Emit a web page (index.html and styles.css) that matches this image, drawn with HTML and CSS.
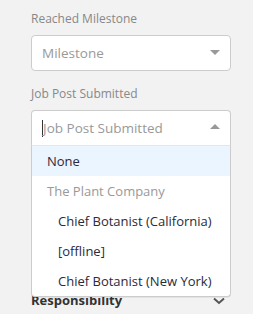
FILE: index.html
```html
<!DOCTYPE html>
<html lang="en">
<head>
    <meta charset="UTF-8">
    <meta name="viewport" content="width=device-width, initial-scale=1.0">
    <title>Filters</title>
    <link rel="stylesheet" href="styles.css">
</head>
<body>

    <div class="filters">
        <label class="field-label">Reached Milestone</label>
        <div class="select">
            <div class="select-control">
                <span class="select-placeholder">Milestone</span>
                <span class="select-arrow"></span>
            </div>
        </div>

        <label class="field-label">Job Post Submitted</label>
        <div class="select is-open">
            <div class="select-control">
                <span class="select-caret"></span>
                <span class="select-placeholder">Job Post Submitted</span>
                <span class="select-arrow"></span>
            </div>
            <div class="select-menu">
                <div class="select-option is-focused">None</div>
                <div class="select-group">The Plant Company</div>
                <div class="select-option is-child">Chief Botanist (California)</div>
                <div class="select-option is-child">[offline]</div>
                <div class="select-option is-child">Chief Botanist (New York)</div>
            </div>
        </div>

        <div class="section-header">
            <span>Responsibility</span>
            <svg class="chevron" width="12" height="8" viewBox="0 0 12 8">
                <path d="M1 1.5 L6 6 L11 1.5" fill="none" stroke="#555" stroke-width="2"/>
            </svg>
        </div>
    </div>

</body>
</html>
```

FILE: styles.css
```css
body {
    margin: 0;
    padding: 0;
    background-color: #f2f2f2;
    font-family: "Open Sans", "Liberation Sans", sans-serif;
    color: #333;
}
.filters {
    width: 200px;
    padding: 11px 0 0 31px;
}
.field-label {
    display: block;
    font-size: 12px;
    line-height: 16px;
    color: #888;
    margin-bottom: 8px;
}
.select {
    position: relative;
    margin-bottom: 15px;
}
.select-control {
    display: flex;
    align-items: center;
    height: 34px;
    padding: 0 10px;
    background-color: white;
    border: 1px solid #ccc;
    border-radius: 4px;
}
.select-placeholder {
    flex: 1;
    font-size: 13.5px;
    color: #999;
}
.select-caret {
    width: 1px;
    height: 17px;
    background-color: #333;
}
.select-arrow {
    width: 0;
    height: 0;
    border-style: solid;
    border-width: 5px 5px 3px;
    border-color: #999 transparent transparent;
    margin-top: 2px;
}
.is-open {
    margin-bottom: 0;
}
.is-open .select-control {
    border-radius: 4px 4px 0 0;
    border-bottom-color: #e6e6e6;
}
.is-open .select-arrow {
    border-width: 0 5px 5px;
    border-color: transparent transparent #999;
    margin-top: -3px;
}
.select-menu {
    position: absolute;
    top: 100%;
    left: 0;
    right: 0;
    z-index: 1;
    background-color: white;
    border: 1px solid #ccc;
    border-top: none;
    border-radius: 0 0 4px 4px;
    box-shadow: 0 1px 0 rgba(0, 0, 0, 0.06);
}
.select-option, .select-group {
    height: 30px;
    line-height: 30px;
    font-size: 13px;
    padding: 0 15px;
    white-space: nowrap;
}
.select-option {
    color: #2a2a3a;
}
.select-option.is-focused {
    background-color: #ebf5ff;
}
.select-group {
    color: #999;
}
.select-option.is-child {
    padding-left: 26px;
}
.section-header {
    display: flex;
    justify-content: space-between;
    align-items: center;
    margin-top: 144px;
    font-size: 13px;
    font-weight: bold;
    line-height: 20px;
    color: #333;
}
.chevron {
    margin-right: 6px;
    margin-top: 2px;
}
```
